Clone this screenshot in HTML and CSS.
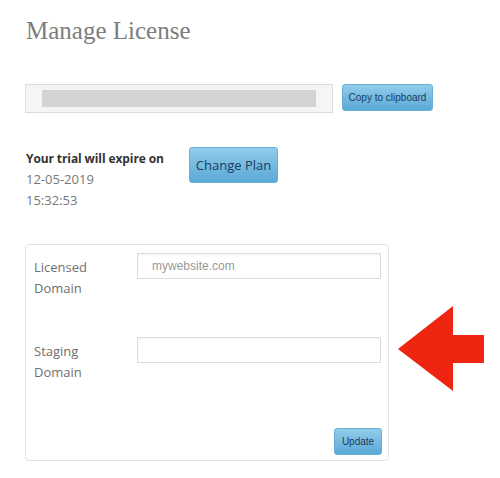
FILE: index.html
```html
<!DOCTYPE html>
<html>
<head>
<meta charset="utf-8">
<link rel="stylesheet" href="styles.css">
</head>
<body>
<div class="page">
  <h1 class="title">Manage License</h1>
  <div class="license-row">
    <div class="key-box"><div class="key-mask"></div></div>
    <button class="btn btn-small">Copy to clipboard</button>
  </div>
  <div class="trial-row">
    <div class="trial-info">
      <div class="trial-head">Your trial will expire on</div>
      <div class="trial-line">12-05-2019</div>
      <div class="trial-line">15:32:53</div>
    </div>
    <button class="btn btn-plan">Change Plan</button>
  </div>
  <div class="card-wrap">
    <div class="card">
      <div class="field">
        <label class="field-label">Licensed<br>Domain</label>
        <input class="field-input" type="text" placeholder="mywebsite.com">
      </div>
      <div class="field">
        <label class="field-label">Staging<br>Domain</label>
        <input class="field-input" type="text">
      </div>
      <div class="card-foot">
        <button class="btn btn-update">Update</button>
      </div>
    </div>
    <svg class="arrow" width="88" height="88" viewBox="0 0 88 88">
      <polygon points="0,43 55,0 55,29 86,29 86,57 55,57 55,85" fill="#ee2511"/>
    </svg>
  </div>
</div>
</body>
</html>
```

FILE: styles.css
```css
* { box-sizing: border-box; }
body {
  margin: 0;
  background: #fff;
  font-family: "Open Sans", "DejaVu Sans", sans-serif;
}
.page {
  padding: 14px 0 0 25px;
}
.title {
  margin: 0 0 0 1px;
  font-family: "Liberation Serif", serif;
  font-weight: normal;
  font-size: 25px;
  line-height: 34px;
  color: #7d7d7d;
}
.license-row {
  display: flex;
  align-items: flex-start;
  gap: 9px;
  margin-top: 36px;
}
.key-box {
  width: 308px;
  height: 29px;
  border: 1px solid #dcdcdc;
  background: #f5f5f5;
  padding: 5px 16px 5px 16px;
}
.key-mask {
  height: 17px;
  background: #d4d4d4;
}
.btn {
  border: 1px solid #6aaed6;
  border-radius: 3px;
  background: linear-gradient(#92ccea, #5aa9d7);
  color: #1b3c60;
  font-family: "Liberation Sans", Arial, sans-serif;
  padding: 0;
  cursor: pointer;
}
.btn-small {
  width: 91px;
  height: 27px;
  font-size: 10px;
}
.trial-row {
  display: flex;
  align-items: flex-start;
  margin-top: 35px;
}
.trial-info {
  width: 164px;
  padding-left: 1px;
  font-size: 13px;
  line-height: 21px;
  color: #777;
}
.trial-head {
  font-weight: bold;
  font-size: 12px;
  letter-spacing: -0.1px;
  color: #333;
}
.btn-plan {
  width: 89px;
  height: 36px;
  font-family: "Open Sans", sans-serif;
  font-size: 13px;
  margin-top: -1px;
}
.card-wrap {
  position: relative;
  margin-top: 33px;
  width: 475px;
}
.card {
  width: 364px;
  height: 217px;
  border: 1px solid #e2e2e2;
  border-radius: 4px;
  padding: 8px 6px 5px 8px;
  display: flex;
  flex-direction: column;
}
.field {
  display: flex;
  align-items: flex-start;
  height: 84px;
}
.field-label {
  width: 103px;
  margin-top: 4px;
  font-size: 13px;
  line-height: 21px;
  color: #6f6f6f;
}
.field-input {
  width: 244px;
  height: 26px;
  border: 1px solid #dcdcdc;
  box-shadow: inset 0 1px 2px rgba(0,0,0,0.05);
  padding: 0 14px;
  font-family: "Liberation Sans", Arial, sans-serif;
  font-size: 12px;
  color: #555;
  background: #fff;
}
.field-input::placeholder { color: #999; }
.card-foot {
  margin-top: auto;
  display: flex;
  justify-content: flex-end;
}
.btn-update {
  width: 48px;
  height: 27px;
  font-size: 10px;
}
.arrow {
  position: absolute;
  left: 373px;
  top: 62px;
}
```
